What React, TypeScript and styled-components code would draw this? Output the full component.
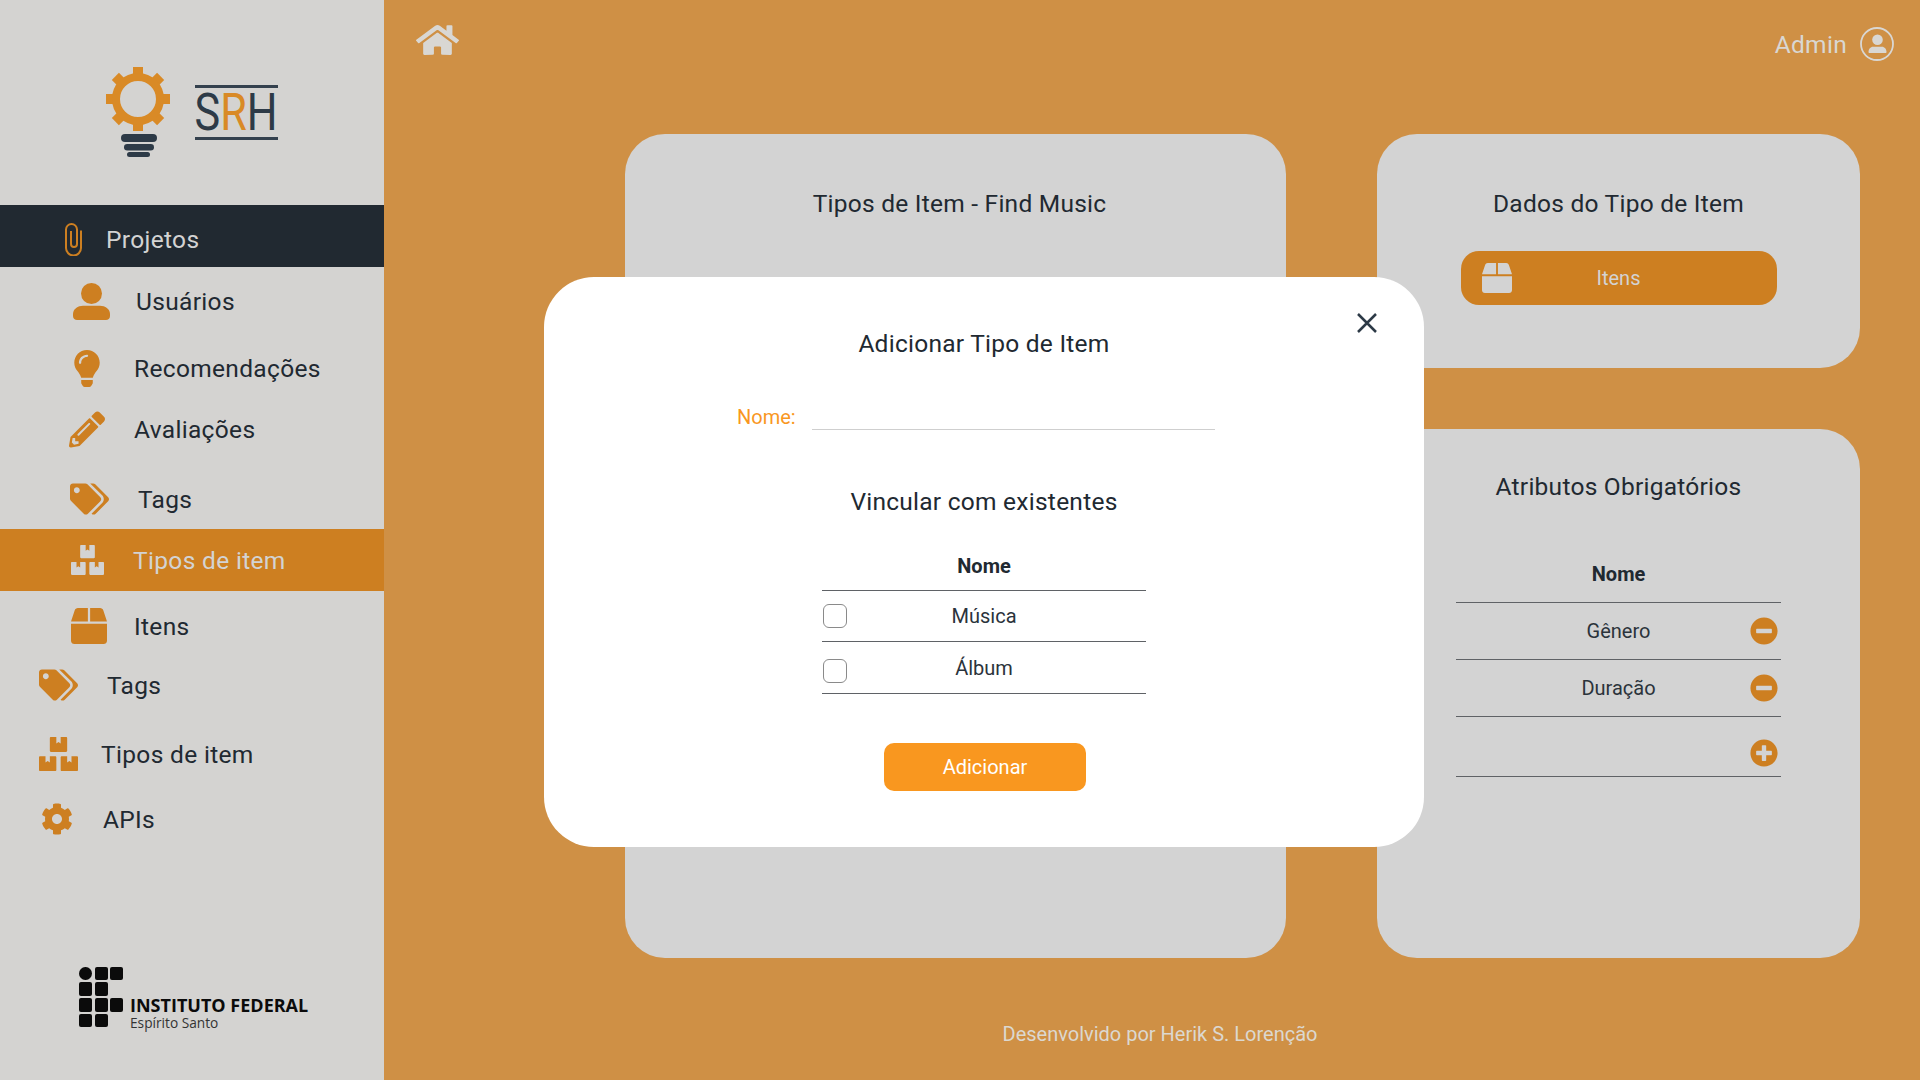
import React from "react";
import styled, { createGlobalStyle } from "styled-components";
import {
  FaBox,
  FaBoxes,
  FaCog,
  FaHome,
  FaLightbulb,
  FaMinusCircle,
  FaPencilAlt,
  FaPlusCircle,
  FaTags,
} from "react-icons/fa";

const GlobalStyle = createGlobalStyle`
  html, body {
    margin: 0;
    padding: 0;
    height: 100%;
    font-family: Roboto, "Liberation Sans", sans-serif;
    color: #212931;
  }
  * {
    box-sizing: border-box;
  }
`;

const Page = styled.div`
  width: 1920px;
  height: 1080px;
  display: flex;
  overflow: hidden;
  background-color: #cf9045;
`;

const Sidebar = styled.aside`
  width: 384px;
  flex-shrink: 0;
  display: flex;
  flex-direction: column;
  background-color: #d4d3d1;
`;

const LogoArea = styled.div`
  height: 205px;
  padding: 67px 0 0 106px;
  display: flex;
  align-items: flex-start;
  gap: 25px;
`;

const SrhMark = styled.div`
  margin-top: 18px;
  width: 83px;
  height: 55px;
  display: flex;
  align-items: center;
  justify-content: center;
  border-top: 3px solid #34414e;
  border-bottom: 3px solid #34414e;
  color: #2d3a47;
`;

const SrhLetters = styled.div`
  font-size: 52px;
  line-height: 1;
  white-space: nowrap;
  transform: scaleX(0.83);
  span {
    color: #d98a26;
  }
`;

const Nav = styled.nav`
  display: flex;
  flex-direction: column;
`;

const NavRow = styled.div<{
  $height: number;
  $left: number;
  $iconWidth: number;
  $iconHeight: number;
  $textLeft: number;
  $top?: number;
  $variant?: "dark" | "active";
}>`
  height: ${(p) => p.$height}px;
  padding-top: ${(p) => p.$top ?? 0}px;
  padding-left: ${(p) => p.$left}px;
  display: flex;
  align-items: center;
  font-size: 24.5px;
  letter-spacing: 0.33px;
  background-color: ${(p) =>
    p.$variant === "dark"
      ? "#212931"
      : p.$variant === "active"
        ? "#cd7f21"
        : "transparent"};
  color: ${(p) => (p.$variant ? "#d3d3d3" : "#212931")};
  svg {
    flex-shrink: 0;
    width: ${(p) => p.$iconWidth}px;
    height: ${(p) => p.$iconHeight}px;
    color: ${(p) => (p.$variant === "active" ? "#d3d3d3" : "#cd7f21")};
  }
  span {
    margin-left: ${(p) => p.$textLeft - p.$left - p.$iconWidth}px;
  }
`;

const IfLogo = styled.div`
  margin-top: 129.5px;
  padding-left: 79px;
  display: flex;
  align-items: flex-end;
  gap: 7px;
  color: #0b0b0b;
`;

const IfGrid = styled.div`
  display: grid;
  grid-template-columns: repeat(3, 13px);
  grid-auto-rows: 13.5px;
  gap: 2.3px 2.5px;
`;

const IfCell = styled.i<{ $round?: boolean; $hidden?: boolean }>`
  display: block;
  background-color: ${(p) => (p.$hidden ? "transparent" : "#0b0b0b")};
  border-radius: ${(p) => (p.$round ? "50%" : "2px")};
`;

const IfText = styled.div`
  font-family: "Open Sans", sans-serif;
  display: flex;
  flex-direction: column;
  margin-bottom: -3px;
  strong {
    font-size: 18px;
    line-height: 18px;
    font-weight: 700;
    white-space: nowrap;
  }
  small {
    margin-top: 1.5px;
    font-size: 13.7px;
    line-height: 15px;
    color: #333;
  }
`;

const Main = styled.main`
  flex: 1;
  display: flex;
  flex-direction: column;
`;

const Header = styled.header`
  height: 134px;
  padding: 23px 26px 0 32px;
  display: flex;
  justify-content: space-between;
  align-items: flex-start;
  color: #d9d7d3;
`;

const HomeIcon = styled(FaHome).attrs({ preserveAspectRatio: "none" })`
  width: 43px;
  height: 34px;
`;

const UserBox = styled.div`
  display: flex;
  align-items: center;
  gap: 13px;
  height: 42px;
  font-size: 24.5px;
  letter-spacing: 0.3px;
`;

const Cards = styled.section`
  height: 824px;
  margin: 0 60px 0 241px;
  display: grid;
  grid-template-columns: 661px 483px;
  justify-content: space-between;
`;

const Card = styled.div`
  border-radius: 40px;
  background-color: #d3d3d3;
  display: flex;
  flex-direction: column;
  align-items: center;
  padding-top: 53px;
`;

const ProjectCard = styled(Card)`
  padding-left: 8px;
`;

const RightColumn = styled.div`
  display: flex;
  flex-direction: column;
  gap: 61px;
`;

const CardTitle = styled.h2`
  margin: 0;
  font-size: 24.5px;
  line-height: 34px;
  font-weight: 400;
  letter-spacing: 0.25px;
`;

const DataCard = styled(Card)`
  height: 234px;
`;

const AttrCard = styled(Card)`
  flex: 1;
  padding-top: 41px;
`;

const ItemsButton = styled.button`
  width: 316px;
  height: 54px;
  margin-top: 30px;
  padding: 0 0 0 21px;
  border: 0;
  border-radius: 18px;
  background-color: #cd7f21;
  color: #d3d3d3;
  display: flex;
  align-items: center;
  font-family: inherit;
  font-size: 20px;
  svg {
    width: 30px;
    height: 30px;
  }
  span {
    margin-left: 53px;
    width: 108px;
    text-align: center;
  }
`;

const AttrTable = styled.div`
  width: 325px;
  margin-top: 23px;
  display: flex;
  flex-direction: column;
`;

const HeadCell = styled.div<{ $height: number; $pad: number }>`
  height: ${(p) => p.$height}px;
  padding-bottom: ${(p) => p.$pad}px;
  border-bottom: 1.5px solid #5f6266;
  display: flex;
  align-items: flex-end;
  justify-content: center;
  font-weight: 700;
  font-size: 20px;
  line-height: 23px;
`;

const AttrRow = styled.div<{ $height: number }>`
  position: relative;
  height: ${(p) => p.$height}px;
  border-bottom: 1.5px solid #5f6266;
  display: flex;
  align-items: center;
  justify-content: center;
  font-size: 20px;
  color: #2b333b;
  svg {
    position: absolute;
    right: 3px;
    width: 28px;
    height: 28px;
    color: #cd7f21;
  }
`;

const AddAttrIcon = styled(FaPlusCircle)`
  margin-top: 12px;
`;

const Footer = styled.footer`
  height: 122px;
  padding: 29px 0 0 16px;
  display: flex;
  align-items: center;
  justify-content: center;
  font-size: 20px;
  color: #dcd8d0;
`;

const Modal = styled.div`
  position: absolute;
  left: 544px;
  top: 277px;
  width: 880px;
  height: 570px;
  border-radius: 50px;
  background-color: #fff;
  display: flex;
  flex-direction: column;
  align-items: center;
  padding-top: 50px;
`;

const CloseButton = styled.button`
  position: absolute;
  top: 34px;
  right: 45px;
  width: 24px;
  height: 24px;
  padding: 0;
  border: 0;
  background: none;
  color: #2d3a47;
`;

const NameField = styled.label`
  margin-top: 32.5px;
  margin-right: 16px;
  width: 478px;
  display: flex;
  align-items: flex-end;
  gap: 16px;
  font-size: 20px;
  line-height: 26px;
  color: #f9971f;
`;

const NameInput = styled.input`
  flex: 1;
  height: 36px;
  border: 0;
  border-bottom: 1.5px solid #cfcfcf;
  outline: none;
  background: none;
`;

const LinkTitle = styled(CardTitle)`
  margin-top: 55.5px;
`;

const LinkTable = styled.div`
  width: 324px;
  margin-top: 25px;
  display: flex;
  flex-direction: column;
`;

const RowCheck = styled.input<{ $nudge?: number }>`
  position: absolute;
  left: 1px;
  width: 24px;
  height: 24px;
  margin: ${(p) => p.$nudge ?? 0}px 0 0;
  appearance: none;
  border: 1.5px solid #8a8a8a;
  border-radius: 6px;
  background: #fff;
`;

const AddButton = styled.button`
  width: 202px;
  height: 48px;
  margin: 49px 0 0 2px;
  border: 0;
  border-radius: 10px;
  background-color: #f9971f;
  color: #fff;
  font-family: inherit;
  font-size: 20px;
`;

const GearBulb = () => (
  <svg width="64" height="90" viewBox="0 0 64 90" aria-hidden="true">
    <g fill="#d98a26">
      <rect x="27" y="0" width="10" height="64" />
      <rect x="0" y="27" width="64" height="10" />
      <rect x="27" y="0" width="10" height="64" transform="rotate(45 32 32)" />
      <rect x="27" y="0" width="10" height="64" transform="rotate(-45 32 32)" />
    </g>
    <circle cx="32" cy="32" r="22" fill="#d4d3d1" stroke="#d98a26" strokeWidth="8" />
    <rect x="15" y="67" width="36" height="8" rx="4" fill="#2d3a47" />
    <rect x="18" y="77" width="30" height="6.5" rx="3.2" fill="#2d3a47" />
    <rect x="21" y="85" width="23" height="5" rx="2.5" fill="#2d3a47" />
  </svg>
);

const Paperclip = () => (
  <svg viewBox="0 0 17 33" fill="none" stroke="currentColor" strokeWidth="2" aria-hidden="true">
    <path d="M16 7.500V25a7.500 7.500 0 0 1-15 0V6.500a5.500 5.500 0 0 1 11 0V21a3 3 0 0 1-6 0V8" />
  </svg>
);

const PersonIcon = () => (
  <svg viewBox="0 0 37 37" fill="currentColor" aria-hidden="true">
    <circle cx="18.500" cy="10.500" r="10.500" />
    <path d="M0 31c0-5 5-8.200 10-8.200h17c5 0 10 3.200 10 8.200v2c0 2.500-2 4-4 4H4c-2 0-4-1.500-4-4z" />
  </svg>
);

const UserCircle = () => (
  <svg width="34" height="34" viewBox="0 0 34 34" aria-hidden="true">
    <circle cx="17" cy="17" r="16" fill="none" stroke="currentColor" strokeWidth="1.8" />
    <circle cx="17.500" cy="12.700" r="5.300" fill="currentColor" />
    <path d="M8.500 25c0-3 2-5.300 4.500-5.300h9c2.500 0 4.500 2.300 4.500 5.300 0 .6-.4 1-1 1h-16c-.6 0-1-.4-1-1z" fill="currentColor" />
  </svg>
);

const CloseIcon = () => (
  <svg viewBox="0 0 24 24" width="24" height="24" fill="none" stroke="currentColor" strokeWidth="2.500" aria-hidden="true">
    <path d="M3 3l18 18M21 3L3 21" />
  </svg>
);

const ifCells = [
  { round: true }, {}, {},
  {}, {}, { hidden: true },
  {}, {}, {},
  {}, {}, { hidden: true },
];

export default function App() {
  return (
    <Page>
      <GlobalStyle />
      <Sidebar>
        <LogoArea>
          <GearBulb />
          <SrhMark>
            <SrhLetters>
              S<span>R</span>H
            </SrhLetters>
          </SrhMark>
        </LogoArea>
        <Nav>
          <NavRow $height={62} $top={7} $left={65} $iconWidth={17} $iconHeight={33} $textLeft={106} $variant="dark">
            <Paperclip />
            <span>Projetos</span>
          </NavRow>
          <NavRow $height={68} $left={73} $iconWidth={37} $iconHeight={37} $textLeft={136}>
            <PersonIcon />
            <span>Usuários</span>
          </NavRow>
          <NavRow $height={66} $left={74} $iconWidth={26} $iconHeight={37} $textLeft={134}>
            <FaLightbulb />
            <span>Recomendações</span>
          </NavRow>
          <NavRow $height={56} $left={69} $iconWidth={36} $iconHeight={37} $textLeft={134}>
            <FaPencilAlt />
            <span>Avaliações</span>
          </NavRow>
          <NavRow $height={72} $top={12} $left={70} $iconWidth={39} $iconHeight={32} $textLeft={138}>
            <FaTags />
            <span>Tags</span>
          </NavRow>
          <NavRow $height={62} $left={71} $iconWidth={33} $iconHeight={30} $textLeft={133} $variant="active">
            <FaBoxes preserveAspectRatio="none" />
            <span>Tipos de item</span>
          </NavRow>
          <NavRow $height={70} $left={71} $iconWidth={36} $iconHeight={36} $textLeft={134}>
            <FaBox />
            <span>Itens</span>
          </NavRow>
          <NavRow $height={46} $top={2} $left={39} $iconWidth={39} $iconHeight={32} $textLeft={107}>
            <FaTags />
            <span>Tags</span>
          </NavRow>
          <NavRow $height={94} $left={39} $iconWidth={39} $iconHeight={34} $textLeft={101}>
            <FaBoxes preserveAspectRatio="none" />
            <span>Tipos de item</span>
          </NavRow>
          <NavRow $height={36} $left={41} $iconWidth={32} $iconHeight={32} $textLeft={103}>
            <FaCog />
            <span>APIs</span>
          </NavRow>
        </Nav>
        <IfLogo>
          <IfGrid>
            {ifCells.map((c, i) => (
              <IfCell key={i} $round={c.round} $hidden={c.hidden} />
            ))}
          </IfGrid>
          <IfText>
            <strong>INSTITUTO FEDERAL</strong>
            <small>Espírito Santo</small>
          </IfText>
        </IfLogo>
      </Sidebar>
      <Main>
        <Header>
          <HomeIcon />
          <UserBox>
            Admin
            <UserCircle />
          </UserBox>
        </Header>
        <Cards>
          <ProjectCard>
            <CardTitle>Tipos de Item - Find Music</CardTitle>
          </ProjectCard>
          <RightColumn>
            <DataCard>
              <CardTitle>Dados do Tipo de Item</CardTitle>
              <ItemsButton>
                <FaBox />
                <span>Itens</span>
              </ItemsButton>
            </DataCard>
            <AttrCard>
              <CardTitle>Atributos Obrigatórios</CardTitle>
              <AttrTable>
                <HeadCell $height={76} $pad={16}>Nome</HeadCell>
                <AttrRow $height={57}>
                  Gênero
                  <FaMinusCircle />
                </AttrRow>
                <AttrRow $height={57}>
                  Duração
                  <FaMinusCircle />
                </AttrRow>
                <AttrRow $height={60}>
                  <AddAttrIcon />
                </AttrRow>
              </AttrTable>
            </AttrCard>
          </RightColumn>
        </Cards>
        <Footer>Desenvolvido por Herik S. Lorenção</Footer>
      </Main>
      <Modal>
        <CloseButton aria-label="Fechar">
          <CloseIcon />
        </CloseButton>
        <CardTitle>Adicionar Tipo de Item</CardTitle>
        <NameField>
          Nome:
          <NameInput />
        </NameField>
        <LinkTitle>Vincular com existentes</LinkTitle>
        <LinkTable>
          <HeadCell $height={47} $pad={12}>Nome</HeadCell>
          <AttrRow $height={51}>
            <RowCheck type="checkbox" />
            Música
          </AttrRow>
          <AttrRow $height={52}>
            <RowCheck type="checkbox" $nudge={6} />
            Álbum
          </AttrRow>
        </LinkTable>
        <AddButton>Adicionar</AddButton>
      </Modal>
    </Page>
  );
}
